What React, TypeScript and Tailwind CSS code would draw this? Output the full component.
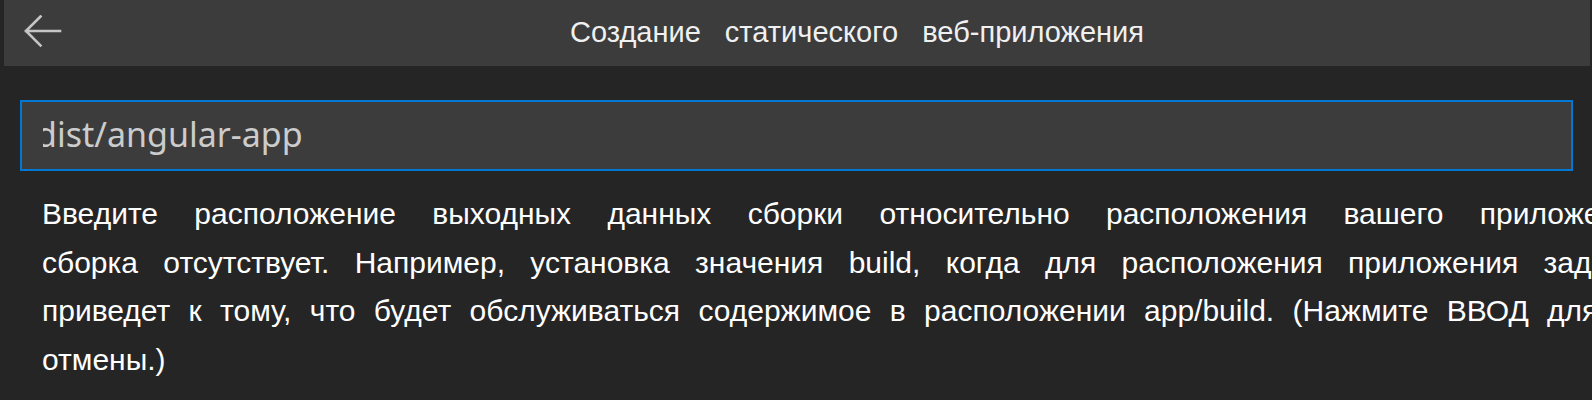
import React from 'react';

function BackArrow() {
  return (
    <svg width="40" height="36" viewBox="0 0 40 36" className="block">
      <path
        d="M37 16H3M3 16L17.5 1.5M3 16L17.5 30.5"
        fill="none"
        stroke="#c5c5c5"
        strokeWidth="2.6"
        strokeLinecap="square"
      />
    </svg>
  );
}

export default function App() {
  return (
    <div className="w-[1592px] h-[400px] overflow-hidden bg-[#252526] font-['Liberation_Sans',Arial,sans-serif]">
      {/* Title bar */}
      <div className="ml-[4px] w-[1586px] h-[66px] bg-[#3c3c3c] flex items-center">
        <div className="ml-[19px] w-[40px]">
          <BackArrow />
        </div>
        <div className="ml-[507px] text-[29px] text-[#f0f0f0] whitespace-nowrap [word-spacing:16px]">
          Создание статического веб-приложения
        </div>
      </div>

      {/* Input box */}
      <div className="mt-[34px] ml-[20px] w-[1553px] h-[71px] border-2 border-[#0078d4] bg-[#3c3c3c] flex items-center px-[21px]">
        <div className="overflow-hidden w-full">
          <div className="-ml-[7px] -mt-[3px] text-[34px] text-[#cccccc] whitespace-nowrap font-['Noto_Sans','Open_Sans',sans-serif]">
            dist/angular-app
          </div>
        </div>
      </div>

      {/* Description, lines run past the right edge */}
      <div className="mt-[19px] pl-[42px] text-[30px] leading-[48.5px] text-white">
        <div className="whitespace-nowrap [word-spacing:28px]">
          Введите расположение выходных данных сборки относительно расположения вашего приложения или оставьте поле пустым, если
        </div>
        <div className="whitespace-nowrap [word-spacing:17px]">
          сборка отсутствует. Например, установка значения build, когда для расположения приложения задано значение app,
        </div>
        <div className="whitespace-nowrap [word-spacing:10px]">
          приведет к тому, что будет обслуживаться содержимое в расположении app/build. (Нажмите ВВОД для подтверждения или ESC для
        </div>
        <div className="whitespace-nowrap">отмены.)</div>
      </div>
    </div>
  );
}
